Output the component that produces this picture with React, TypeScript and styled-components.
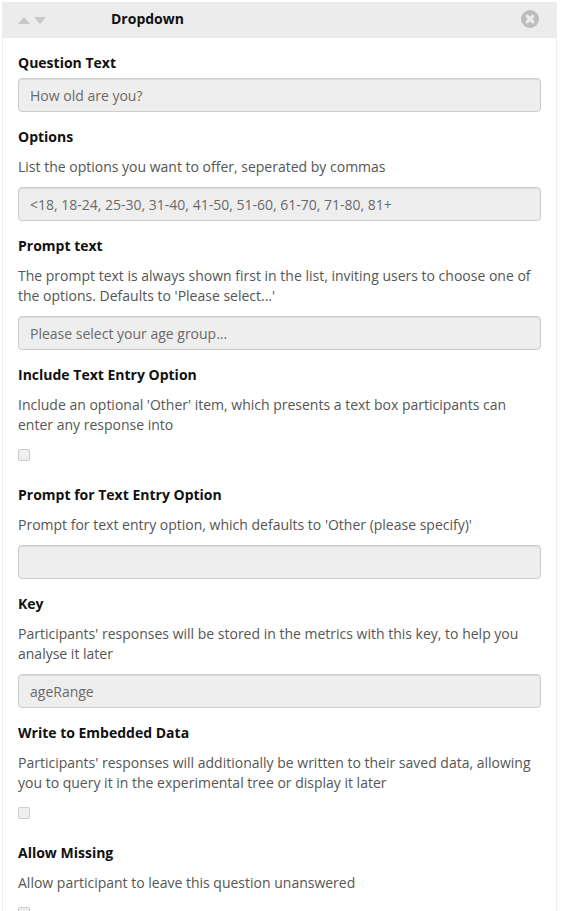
import React, { ReactElement } from 'react';
import styled, { createGlobalStyle } from 'styled-components';

const GlobalStyle = createGlobalStyle`
  * {
    box-sizing: border-box;
  }
  html, body {
    margin: 0;
    height: 100%;
    overflow: hidden;
    background: #fff;
    font-family: 'Open Sans', sans-serif;
    font-size: 14px;
    line-height: 20px;
    color: #333;
  }
`;

const Card = styled.section`
  width: 555px;
  margin: 2px 0 0 2px;
  background: #fff;
  border-left: 1px solid #eee;
  border-right: 1px solid #eee;
`;

const Header = styled.header`
  height: 36px;
  margin: 0 -1px;
  padding: 0 16px;
  background: #ececec;
  display: flex;
  align-items: center;
`;

const Arrows = styled.div`
  display: flex;
  gap: 4px;
  width: 93px;
  flex-shrink: 0;
`;

const Arrow = styled.svg`
  width: 12px;
  height: 7px;
  fill: #c8c8c8;
`;

const Title = styled.h2`
  margin: 0 0 2px;
  flex: 1;
  font-size: 14px;
  font-weight: 700;
  line-height: 20px;
  color: #111;
`;

const CloseIcon = styled.svg`
  width: 18px;
  height: 18px;
  margin: 0 2px 2px 0;
`;

const Body = styled.div`
  padding: 15px 15px 0;
`;

const Group = styled.div`
  margin-bottom: 15px;
`;

const Label = styled.label`
  display: block;
  margin-bottom: 5px;
  font-weight: 700;
  color: #111;
`;

const Help = styled.p`
  margin: 10px 0;
  color: #555;
`;

const TextField = styled.input`
  display: block;
  width: 100%;
  height: 34px;
  padding: 6px 11px;
  font: inherit;
  color: #6a6a6a;
  background: #eee;
  border: 1px solid #ccc;
  border-radius: 4px;
  box-shadow: inset 0 1px 1px rgba(0, 0, 0, 0.075);
`;

const CheckRow = styled.div`
  height: 25px;
  padding-top: 4px;
`;

const Check = styled.input`
  display: block;
  width: 12px;
  height: 12px;
  margin: 0;
  appearance: none;
  background: #efefef;
  border: 1px solid #ccc;
  border-radius: 2px;
`;

interface IField {
  label: string;
  help?: string;
  value?: string;
  checkbox?: boolean;
}

const fields: IField[] = [
  { label: 'Question Text', value: 'How old are you?' },
  {
    label: 'Options',
    help: 'List the options you want to offer, seperated by commas',
    value: '<18, 18-24, 25-30, 31-40, 41-50, 51-60, 61-70, 71-80, 81+',
  },
  {
    label: 'Prompt text',
    help: "The prompt text is always shown first in the list, inviting users to choose one of the options. Defaults to 'Please select...'",
    value: 'Please select your age group...',
  },
  {
    label: 'Include Text Entry Option',
    help: "Include an optional 'Other' item, which presents a text box participants can enter any response into",
    checkbox: true,
  },
  {
    label: 'Prompt for Text Entry Option',
    help: "Prompt for text entry option, which defaults to 'Other (please specify)'",
    value: '',
  },
  {
    label: 'Key',
    help: "Participants' responses will be stored in the metrics with this key, to help you analyse it later",
    value: 'ageRange',
  },
  {
    label: 'Write to Embedded Data',
    help: "Participants' responses will additionally be written to their saved data, allowing you to query it in the experimental tree or display it later",
    checkbox: true,
  },
  {
    label: 'Allow Missing',
    help: 'Allow participant to leave this question unanswered',
    checkbox: true,
  },
];

const App = (): ReactElement => (
  <>
    <GlobalStyle />
    <Card>
      <Header>
        <Arrows>
          <Arrow viewBox="0 0 12 7">
            <path d="M6 0L12 7H0z" />
          </Arrow>
          <Arrow viewBox="0 0 12 7">
            <path d="M0 0h12L6 7z" />
          </Arrow>
        </Arrows>
        <Title>Dropdown</Title>
        <CloseIcon viewBox="0 0 18 18">
          <circle cx="9" cy="9" r="9" fill="#bdbdbd" />
          <path d="M6.2 6.2l5.6 5.6M11.8 6.2l-5.6 5.6" stroke="#ececec" strokeWidth="3.2" strokeLinecap="round" />
        </CloseIcon>
      </Header>
      <Body>
        {fields.map((field) => (
          <Group key={field.label}>
            <Label>{field.label}</Label>
            {field.help && <Help>{field.help}</Help>}
            {field.checkbox ? (
              <CheckRow>
                <Check type="checkbox" readOnly />
              </CheckRow>
            ) : (
              <TextField type="text" defaultValue={field.value} readOnly />
            )}
          </Group>
        ))}
      </Body>
    </Card>
  </>
);

export default App;
